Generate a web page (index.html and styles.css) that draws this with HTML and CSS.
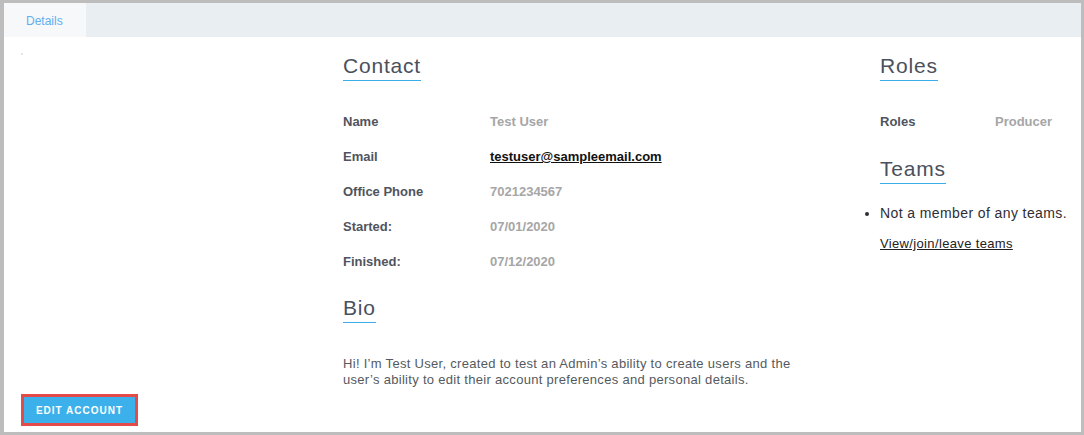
FILE: index.html
```html
<!DOCTYPE html>
<html lang="en">
<head>
<meta charset="utf-8">
<title>Account Details</title>
<link rel="stylesheet" href="styles.css">
</head>
<body>
<div class="frame">
  <div class="tabbar">
    <div class="tab active">Details</div>
  </div>
  <div class="content">
    <aside class="sidebar">
      <span class="avatar-dot"></span>
      <button class="edit-btn" type="button">EDIT ACCOUNT</button>
    </aside>
    <main class="main">
      <h2 class="section-title">Contact</h2>
      <div class="rows">
        <div class="row"><span class="label">Name</span><span class="value">Test User</span></div>
        <div class="row"><span class="label">Email</span><a class="email" href="#">testuser@sampleemail.com</a></div>
        <div class="row"><span class="label">Office Phone</span><span class="value">7021234567</span></div>
        <div class="row"><span class="label">Started:</span><span class="value">07/01/2020</span></div>
        <div class="row"><span class="label">Finished:</span><span class="value">07/12/2020</span></div>
      </div>
      <h2 class="section-title bio-title">Bio</h2>
      <p class="bio">Hi! I’m Test User, created to test an Admin’s ability to create users and the user’s ability to edit their account preferences and personal details.</p>
    </main>
    <section class="side-info">
      <h2 class="section-title">Roles</h2>
      <div class="rows">
        <div class="row"><span class="label label-roles">Roles</span><span class="value">Producer</span></div>
      </div>
      <h2 class="section-title teams-title">Teams</h2>
      <ul class="teams">
        <li>Not a member of any teams.</li>
      </ul>
      <p class="teams-link"><a href="#">View/join/leave teams</a></p>
    </section>
  </div>
</div>
</body>
</html>
```

FILE: styles.css
```css
* { box-sizing: border-box; }

html, body {
  margin: 0;
  padding: 0;
  background: #ffffff;
}

body {
  font-family: "Liberation Sans", Arial, sans-serif;
  color: #333;
}

.frame {
  width: 1084px;
  height: 435px;
  border-style: solid;
  border-color: #bdbdbd;
  border-width: 3px 3px 3px 4px;
  display: flex;
  flex-direction: column;
  background: #fff;
}

.tabbar {
  height: 34px;
  background: #e9eef2;
  display: flex;
  flex: none;
}

.tab {
  height: 34px;
  padding: 2px 20px 0 22px;
  width: 82px;
  line-height: 32px;
  font-size: 12px;
  color: #62aeee;
  background: #f6f8fa;
}

.content {
  flex: 1;
  display: flex;
  min-height: 0;
}

.sidebar {
  width: 339px;
  flex: none;
  display: flex;
  flex-direction: column;
  align-items: flex-start;
  padding: 16px 0 6px 17px;
}

.avatar-dot {
  width: 2px;
  height: 2px;
  background: #dedede;
  border-radius: 1px;
}

.edit-btn {
  margin-top: auto;
  width: 117px;
  height: 32px;
  padding: 0;
  border: 3px solid #e44a47;
  background: #3cb0ea;
  color: #ffffff;
  font-family: "Liberation Sans", Arial, sans-serif;
  font-size: 10px;
  font-weight: 700;
  letter-spacing: 1px;
  cursor: pointer;
}

.main {
  width: 522px;
  flex: none;
  padding-top: 17px;
}

.side-info {
  flex: 1;
  padding: 17px 0 0 15px;
}

.section-title {
  display: inline-block;
  margin: 0;
  font-size: 21px;
  font-weight: 400;
  line-height: 24px;
  letter-spacing: 0.8px;
  color: #4a505c;
  padding-bottom: 2px;
  border-bottom: 1px solid #3aaee8;
}

.rows {
  margin-top: 23px;
}

.row {
  display: flex;
  height: 35px;
  line-height: 35px;
  font-size: 13px;
  font-weight: 700;
}

.label {
  width: 147px;
  flex: none;
  color: #50545e;
}

.label-roles {
  width: 115px;
}

.value {
  color: #a6a6a6;
}

.email {
  color: #111;
  text-decoration: underline;
}

.bio-title {
  margin-top: 17px;
}

.bio {
  margin: 33px 0 0;
  width: 462px;
  font-size: 13px;
  line-height: 16px;
  letter-spacing: 0.3px;
  color: #555a60;
}

.teams-title {
  margin-top: 18px;
}

.teams {
  margin: 19px 0 0;
  padding: 0;
  list-style: disc outside;
  font-size: 14px;
  line-height: 20px;
  letter-spacing: 0.4px;
  color: #2e2e34;
}

.teams-link {
  margin: 13px 0 0;
  font-size: 13px;
  line-height: 16px;
  letter-spacing: 0.35px;
}

.teams-link a {
  color: #222;
  text-decoration: underline;
}
```
